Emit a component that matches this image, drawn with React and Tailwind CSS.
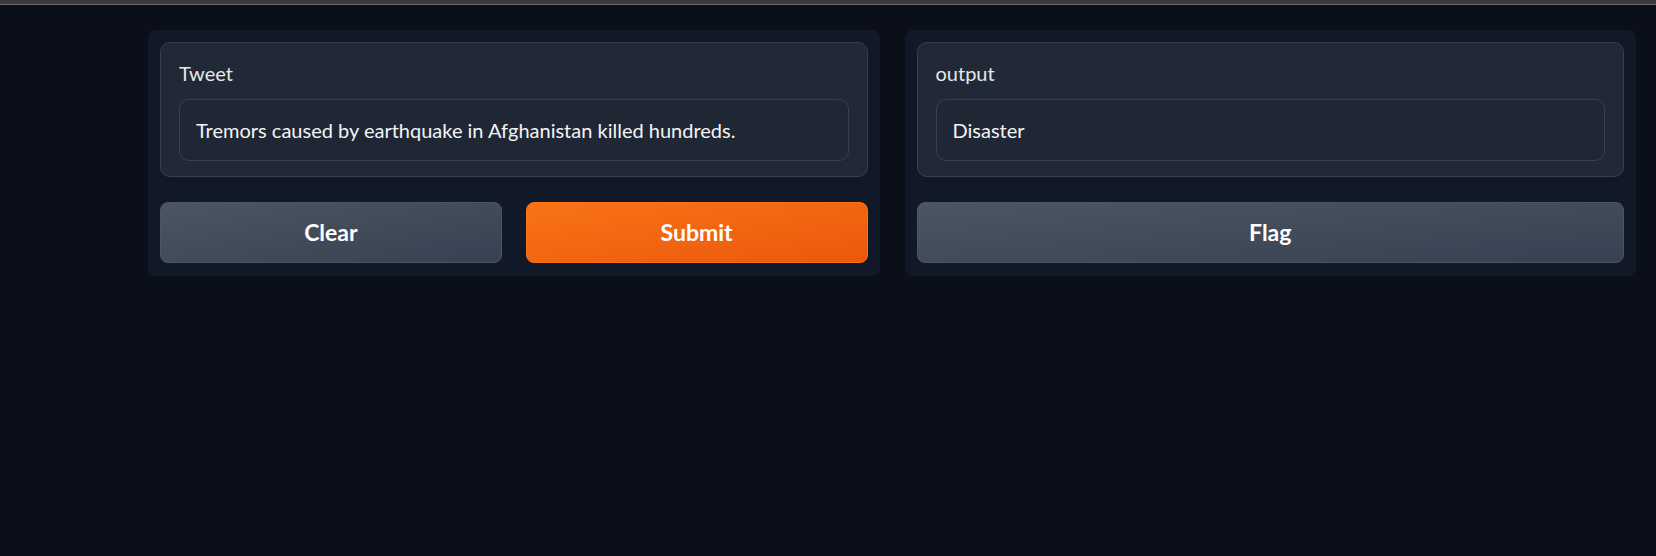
export default function App() {
  return (
    <div className="min-h-screen bg-[#0b0f19] font-['Lato','Liberation_Sans',sans-serif]">
      <div className="h-[5px] bg-[#3b3b3b] border-b border-[#6a6a6a]" />
      <div className="flex gap-[25px] pl-[148px] pr-[20px] pt-[25px]">
        {/* input column */}
        <div className="flex-1 bg-[#111827] rounded-lg px-[12px] pt-[12px] pb-[13px] flex flex-col gap-[25px]">
          <div className="bg-[#212936] border border-[#374151] rounded-[10px] px-[18px] pt-[18px] pb-[15px]">
            <div className="text-[20px] leading-[24px] text-[#e5e7eb] mb-[14px]">Tweet</div>
            <div className="h-[62px] bg-[#1f2735] border border-[#374151] rounded-[10px] px-[16px] flex items-center text-[20px] text-[#f3f4f6]">
              Tremors caused by earthquake in Afghanistan killed hundreds.
            </div>
          </div>
          <div className="flex gap-[24px]">
            <button className="flex-1 h-[61px] rounded-lg border border-[#4b5563] bg-gradient-to-br from-[#4b5563] to-[#374151] text-white font-bold text-[23px]">
              Clear
            </button>
            <button className="flex-1 h-[61px] rounded-lg border border-[#f97316] bg-gradient-to-br from-[#f97316] to-[#ea580c] text-white font-bold text-[23px]">
              Submit
            </button>
          </div>
        </div>
        {/* output column */}
        <div className="flex-1 bg-[#111827] rounded-lg px-[12px] pt-[12px] pb-[13px] flex flex-col gap-[25px]">
          <div className="bg-[#212936] border border-[#374151] rounded-[10px] px-[18px] pt-[18px] pb-[15px]">
            <div className="text-[20px] leading-[24px] text-[#e5e7eb] mb-[14px]">output</div>
            <div className="h-[62px] bg-[#1f2735] border border-[#374151] rounded-[10px] px-[16px] flex items-center text-[20px] text-[#f3f4f6]">
              Disaster
            </div>
          </div>
          <button className="h-[61px] rounded-lg border border-[#4b5563] bg-gradient-to-br from-[#4b5563] to-[#374151] text-white font-bold text-[23px]">
            Flag
          </button>
        </div>
      </div>
    </div>
  );
}
